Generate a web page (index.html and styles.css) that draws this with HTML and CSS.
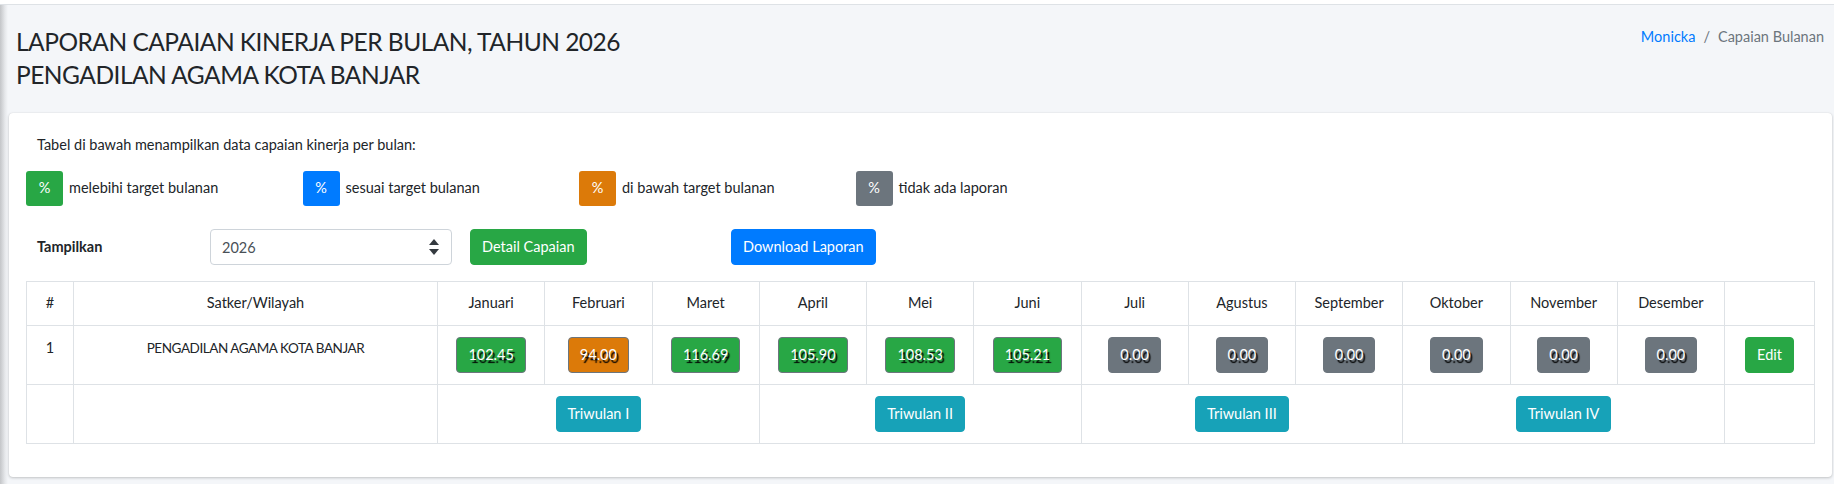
FILE: index.html
```html
<!DOCTYPE html>
<html lang="id">
<head>
    <meta charset="UTF-8">
    <meta name="viewport" content="width=device-width, initial-scale=1.0">
    <title>Capaian Bulanan</title>
    <link rel="stylesheet" href="styles.css">
</head>
<body>
    <div class="topbar"></div>

    <div class="content-header">
        <h1>LAPORAN CAPAIAN KINERJA PER BULAN, TAHUN 2026<br>PENGADILAN AGAMA KOTA BANJAR</h1>
        <ol class="breadcrumb">
            <li><a href="#">Monicka</a></li>
            <li class="sep">/</li>
            <li class="active">Capaian Bulanan</li>
        </ol>
    </div>

    <div class="content">
        <div class="card">
            <div class="card-body">
                <p class="intro">Tabel di bawah menampilkan data capaian kinerja per bulan:</p>

                <div class="legend">
                    <div class="legend-item"><span class="box bg-green">%</span> melebihi target bulanan</div>
                    <div class="legend-item"><span class="box bg-blue">%</span> sesuai target bulanan</div>
                    <div class="legend-item"><span class="box bg-orange">%</span> di bawah target bulanan</div>
                    <div class="legend-item"><span class="box bg-gray">%</span> tidak ada laporan</div>
                </div>

                <form class="filter" action="#" method="get">
                    <label for="tahun">Tampilkan</label>
                    <div class="select-wrap">
                        <select id="tahun" name="tahun">
                            <option>2026</option>
                            <option>2025</option>
                            <option>2024</option>
                        </select>
                        <svg class="select-arrows" width="10" height="16" viewBox="0 0 10 16">
                            <path d="M5 0 L10 6 L0 6 Z" fill="#343a40"/>
                            <path d="M0 10 L10 10 L5 16 Z" fill="#343a40"/>
                        </svg>
                    </div>
                    <div class="cell"><button type="submit" class="btn bg-green">Detail Capaian</button></div>
                    <div class="cell"><button type="button" class="btn bg-blue">Download Laporan</button></div>
                </form>

                <table class="report">
                    <colgroup>
                        <col style="width: 47px">
                        <col style="width: 364px">
                        <col span="12" style="width: 107.25px">
                        <col style="width: 90px">
                    </colgroup>
                    <thead>
                        <tr>
                            <th>#</th>
                            <th>Satker/Wilayah</th>
                            <th>Januari</th>
                            <th>Februari</th>
                            <th>Maret</th>
                            <th>April</th>
                            <th>Mei</th>
                            <th>Juni</th>
                            <th>Juli</th>
                            <th>Agustus</th>
                            <th>September</th>
                            <th>Oktober</th>
                            <th>November</th>
                            <th>Desember</th>
                            <th></th>
                        </tr>
                    </thead>
                    <tbody>
                        <tr>
                            <td>1</td>
                            <td class="satker">PENGADILAN AGAMA KOTA BANJAR</td>
                            <td><span class="val bg-green">102.45</span></td>
                            <td><span class="val bg-orange">94.00</span></td>
                            <td><span class="val bg-green">116.69</span></td>
                            <td><span class="val bg-green">105.90</span></td>
                            <td><span class="val bg-green">108.53</span></td>
                            <td><span class="val bg-green">105.21</span></td>
                            <td><span class="val bg-gray">0.00</span></td>
                            <td><span class="val bg-gray">0.00</span></td>
                            <td><span class="val bg-gray">0.00</span></td>
                            <td><span class="val bg-gray">0.00</span></td>
                            <td><span class="val bg-gray">0.00</span></td>
                            <td><span class="val bg-gray">0.00</span></td>
                            <td><a href="#" class="btn bg-green">Edit</a></td>
                        </tr>
                        <tr>
                            <td></td>
                            <td></td>
                            <td colspan="3"><button class="btn bg-teal">Triwulan I</button></td>
                            <td colspan="3"><button class="btn bg-teal">Triwulan II</button></td>
                            <td colspan="3"><button class="btn bg-teal">Triwulan III</button></td>
                            <td colspan="3"><button class="btn bg-teal">Triwulan IV</button></td>
                            <td></td>
                        </tr>
                    </tbody>
                </table>
            </div>
        </div>
    </div>
</body>
</html>
```

FILE: styles.css
```css
body {
    margin: 0;
    font-family: Lato, "Open Sans", sans-serif;
    font-size: 14.5px;
    line-height: 22.5px;
    color: #212529;
    background-color: #f4f6f9;
    background-image: linear-gradient(to right, #c3c5c8 0, #e6e8eb 5px, #f4f6f9 8px);
    background-repeat: no-repeat;
    background-size: 9px 100%;
    height: 484px;
    overflow: hidden;
}

.topbar {
    height: 4px;
    background-color: #fff;
    border-bottom: 1px solid #dee2e6;
}

.content-header {
    display: flex;
    justify-content: space-between;
    align-items: flex-start;
    padding: 20px 10px 22px 16px;
}

.content-header h1 {
    margin: 0;
    font-size: 24.5px;
    font-weight: 400;
    line-height: 33px;
    letter-spacing: -0.5px;
}

.breadcrumb {
    display: flex;
    list-style: none;
    margin: 0;
    padding: 0;
    line-height: 24px;
}

.breadcrumb a {
    color: #007bff;
    text-decoration: none;
}

.breadcrumb .sep {
    color: #6c757d;
    padding: 0 8px;
}

.breadcrumb .active {
    color: #6c757d;
}

.content {
    padding: 0 2px 0 9px;
}

.card {
    background-color: #fff;
    border-radius: 4px;
    box-shadow: 0 0 1px rgba(0, 0, 0, 0.125), 0 1px 3px rgba(0, 0, 0, 0.2);
}

.card-body {
    padding: 20px 18px 33px 17px;
}

.intro {
    margin: 0;
    padding: 0 11px;
    line-height: 24px;
}

.legend {
    display: grid;
    grid-template-columns: repeat(4, 276.5px);
    margin-top: 14px;
}

.legend-item {
    display: flex;
    align-items: center;
    gap: 6px;
}

.box {
    width: 37px;
    height: 35px;
    border-radius: 3px;
    color: #fff;
    display: flex;
    align-items: center;
    justify-content: center;
}

.filter {
    display: grid;
    grid-template-columns: 184px 242px 261px auto;
    align-items: center;
    margin-top: 23px;
    margin-bottom: 16px;
}

.filter label {
    font-weight: 700;
    padding-left: 11px;
}

.select-wrap {
    position: relative;
}

.select-wrap select {
    width: 100%;
    height: 36px;
    padding: 0 11px;
    border: 1px solid #ced4da;
    border-radius: 4px;
    background-color: #fff;
    color: #495057;
    font-family: inherit;
    font-size: inherit;
    appearance: none;
    -webkit-appearance: none;
}

.select-arrows {
    position: absolute;
    right: 13px;
    top: 10px;
    pointer-events: none;
}

.cell {
    padding-left: 18px;
}

.btn {
    display: inline-block;
    font-family: inherit;
    font-size: inherit;
    line-height: 24px;
    padding: 5px 11px;
    border: 1px solid transparent;
    border-radius: 4px;
    color: #fff;
    text-decoration: none;
    cursor: pointer;
}

.bg-green {
    background-color: #28a745;
    border-color: #28a745;
}

.bg-blue {
    background-color: #007bff;
    border-color: #007bff;
}

.bg-orange {
    background-color: #dc7a09;
    border-color: #dc7a09;
}

.bg-gray {
    background-color: #6c757d;
    border-color: #6c757d;
}

.bg-teal {
    background-color: #17a2b8;
    border-color: #17a2b8;
}

.report {
    width: 1788px;
    table-layout: fixed;
    border-collapse: collapse;
}

.report th,
.report td {
    border: 1px solid #dee2e6;
    text-align: center;
    vertical-align: top;
}

.report th {
    font-weight: 400;
    padding: 10px 12px;
}

.report td {
    padding: 11px 12px;
}

.report .satker {
    font-size: 13.5px;
    letter-spacing: -0.45px;
}

.val {
    display: inline-block;
    padding: 5px 11px;
    line-height: 24px;
    border: 1px solid #6c757d;
    border-radius: 4px;
    color: #fff;
    text-shadow: 2px 3px 1px #000;
}
```
